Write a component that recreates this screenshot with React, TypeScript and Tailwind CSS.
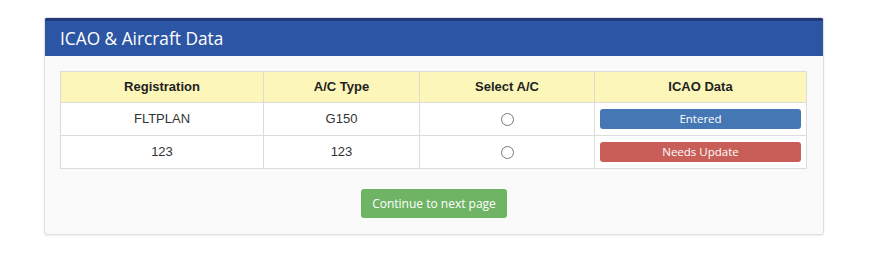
import React from 'react';

interface AircraftRow {
  registration: string;
  acType: string;
  icao: 'entered' | 'update';
}

const rows: AircraftRow[] = [
  { registration: 'FLTPLAN', acType: 'G150', icao: 'entered' },
  { registration: '123', acType: '123', icao: 'update' },
];

export default function App() {
  return (
    <div className="min-h-[261px] bg-white pt-[17px] pl-[44px]">
      <div className="w-[780px] rounded-[3px] border border-[#e0e0e0] bg-[#fafafa] shadow-[0_1px_2px_rgba(0,0,0,0.08)] overflow-hidden">
        <div className="h-[38px] border-t-[3px] border-[#22397c] bg-[#2c55a4] px-[15px] flex items-center">
          <h3 className="text-[17.3px] text-white font-['Open_Sans',sans-serif]">ICAO &amp; Aircraft Data</h3>
        </div>

        <div className="px-[15px] pt-[15px] pb-[16px]">
          <table className="w-[747px] border-collapse font-['Liberation_Sans',Arial,sans-serif] text-[13px] text-[#222]">
            <thead>
              <tr className="h-[31px] bg-[#fcf7b9]">
                <th className="w-[203px] border border-[#dcdcdc] font-bold">Registration</th>
                <th className="w-[156px] border border-[#dcdcdc] font-bold">A/C Type</th>
                <th className="w-[175px] border border-[#dcdcdc] font-bold">Select A/C</th>
                <th className="border border-[#dcdcdc] font-bold">ICAO Data</th>
              </tr>
            </thead>
            <tbody>
              {rows.map((row) => (
                <tr key={row.registration} className="h-[33px] bg-white">
                  <td className="border border-[#dcdcdc] text-center text-[#333]">{row.registration}</td>
                  <td className="border border-[#dcdcdc] text-center text-[#333]">{row.acType}</td>
                  <td className="border border-[#dcdcdc] text-center">
                    <span className="inline-block w-[13px] h-[13px] rounded-full border border-[#777] bg-white align-middle" />
                  </td>
                  <td className="border border-[#dcdcdc] px-[5px]">
                    <div
                      className={`h-[20px] rounded-[3px] flex items-center justify-center text-white text-[11.5px] font-['Open_Sans',sans-serif] ${
                        row.icao === 'entered' ? 'bg-[#4577b5]' : 'bg-[#c95e58]'
                      }`}
                    >
                      {row.icao === 'entered' ? 'Entered' : 'Needs Update'}
                    </div>
                  </td>
                </tr>
              ))}
            </tbody>
          </table>

          <div className="mt-[20px] flex justify-center">
            <button className="h-[29px] w-[146px] rounded-[3px] bg-[#6fb465] text-white text-[12px] font-['Open_Sans',sans-serif]">
              Continue to next page
            </button>
          </div>
        </div>
      </div>
    </div>
  );
}
